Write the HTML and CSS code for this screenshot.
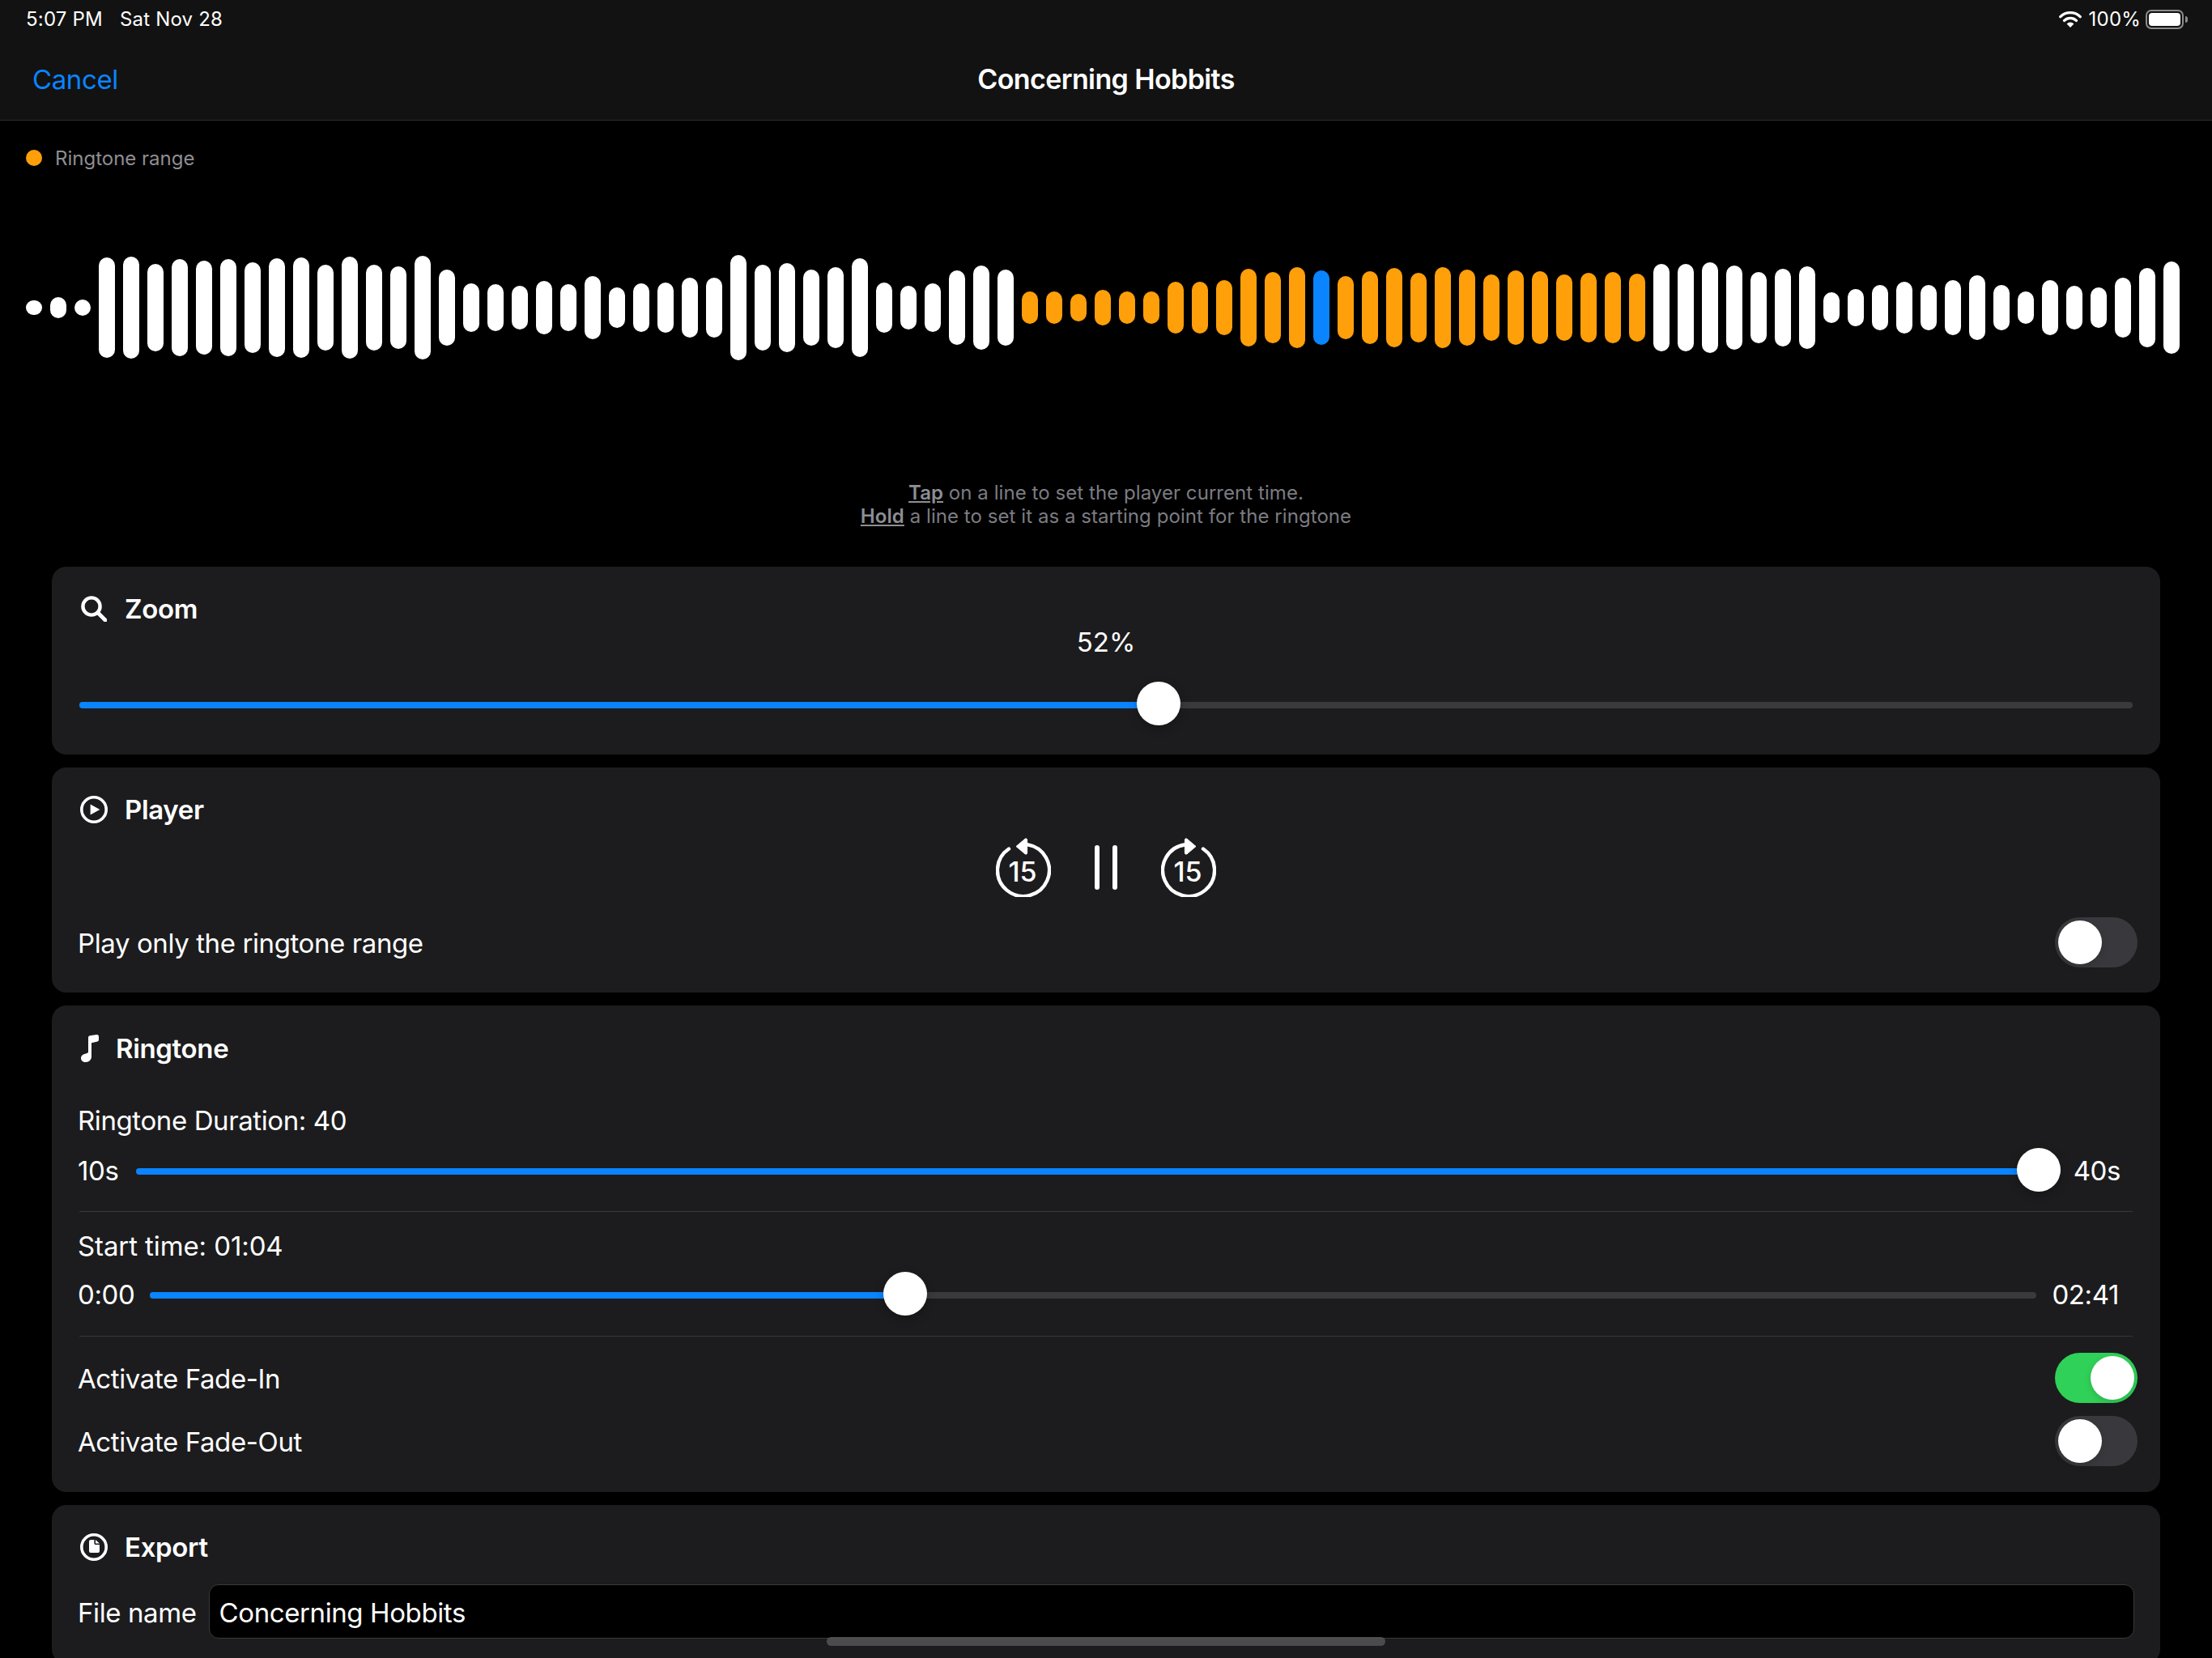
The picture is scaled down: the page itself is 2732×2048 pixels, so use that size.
FILE: index.html
```html
<!DOCTYPE html>
<html lang="en">
<head>
<meta charset="utf-8">
<title>Concerning Hobbits</title>
<link rel="stylesheet" href="styles.css">
</head>
<body>
<div class="page">
  <header class="topbar">
    <div class="status">
      <div class="status-left"><span>5:07 PM</span><span>Sat Nov 28</span></div>
      <div class="status-right">
        <svg class="wifi" viewBox="0 0 28 21"><path d="M1.8 7.6A17.5 17.5 0 0 1 26.2 7.6M6.6 12.4A10.6 10.6 0 0 1 21.4 12.4" fill="none" stroke="#fff" stroke-width="3.4" stroke-linecap="round"/><path d="M14 21 9.6 16.4A6.3 6.3 0 0 1 18.4 16.4Z" fill="#fff"/></svg>
        <span>100%</span>
        <div class="battery"><div class="battery-fill"></div></div><div class="battery-nub"></div>
      </div>
    </div>
    <nav class="navbar">
      <span class="cancel">Cancel</span>
      <span class="title">Concerning Hobbits</span>
    </nav>
  </header>

  <div class="legend"><span class="legend-dot"></span><span>Ringtone range</span></div>

  <div class="wave">
    <i class="bar" style="height:18px"></i><i class="bar" style="height:26px"></i><i class="bar" style="height:20px"></i>
    <i class="bar" style="height:124px"></i><i class="bar" style="height:126px"></i><i class="bar" style="height:108px"></i><i class="bar" style="height:120px"></i><i class="bar" style="height:116px"></i><i class="bar" style="height:120px"></i><i class="bar" style="height:112px"></i><i class="bar" style="height:122px"></i><i class="bar" style="height:124px"></i><i class="bar" style="height:106px"></i><i class="bar" style="height:126px"></i><i class="bar" style="height:106px"></i><i class="bar" style="height:102px"></i><i class="bar" style="height:128px"></i><i class="bar" style="height:94px"></i><i class="bar" style="height:60px"></i><i class="bar" style="height:58px"></i><i class="bar" style="height:54px"></i><i class="bar" style="height:66px"></i><i class="bar" style="height:58px"></i><i class="bar" style="height:78px"></i><i class="bar" style="height:50px"></i><i class="bar" style="height:60px"></i><i class="bar" style="height:62px"></i><i class="bar" style="height:74px"></i><i class="bar" style="height:74px"></i>
    <i class="bar" style="height:130px"></i><i class="bar" style="height:106px"></i><i class="bar" style="height:110px"></i><i class="bar" style="height:94px"></i><i class="bar" style="height:100px"></i><i class="bar" style="height:122px"></i><i class="bar" style="height:62px"></i><i class="bar" style="height:54px"></i><i class="bar" style="height:60px"></i><i class="bar" style="height:92px"></i><i class="bar" style="height:104px"></i><i class="bar" style="height:94px"></i>
    <i class="bar range" style="height:40px"></i><i class="bar range" style="height:40px"></i><i class="bar range" style="height:34px"></i><i class="bar range" style="height:44px"></i><i class="bar range" style="height:40px"></i><i class="bar range" style="height:40px"></i><i class="bar range" style="height:64px"></i><i class="bar range" style="height:64px"></i><i class="bar range" style="height:68px"></i><i class="bar range" style="height:96px"></i><i class="bar range" style="height:88px"></i><i class="bar range" style="height:100px"></i><i class="bar current" style="height:92px"></i><i class="bar range" style="height:78px"></i><i class="bar range" style="height:90px"></i><i class="bar range" style="height:98px"></i><i class="bar range" style="height:86px"></i><i class="bar range" style="height:100px"></i>
    <i class="bar range" style="height:94px"></i><i class="bar range" style="height:82px"></i><i class="bar range" style="height:92px"></i><i class="bar range" style="height:90px"></i><i class="bar range" style="height:82px"></i><i class="bar range" style="height:86px"></i><i class="bar range" style="height:88px"></i><i class="bar range" style="height:84px"></i>
    <i class="bar" style="height:108px"></i><i class="bar" style="height:108px"></i><i class="bar" style="height:112px"></i><i class="bar" style="height:104px"></i><i class="bar" style="height:88px"></i><i class="bar" style="height:96px"></i><i class="bar" style="height:102px"></i><i class="bar" style="height:38px"></i><i class="bar" style="height:46px"></i><i class="bar" style="height:56px"></i><i class="bar" style="height:64px"></i><i class="bar" style="height:56px"></i><i class="bar" style="height:68px"></i><i class="bar" style="height:80px"></i><i class="bar" style="height:56px"></i><i class="bar" style="height:40px"></i><i class="bar" style="height:68px"></i><i class="bar" style="height:54px"></i><i class="bar" style="height:50px"></i><i class="bar" style="height:74px"></i><i class="bar" style="height:98px"></i><i class="bar" style="height:114px"></i>
  </div>

  <p class="help"><u class="strong">Tap</u> on a line to set the player current time.<br><u class="strong">Hold</u> a line to set it as a starting point for the ringtone</p>

  <main class="cards">
    <section class="card card-zoom">
      <h2 class="card-head">
        <svg class="ic-search" viewBox="0 0 32 32"><circle cx="13" cy="13" r="10.6" fill="none" stroke="#fff" stroke-width="4.4"/><path d="M21 21 30 30" stroke="#fff" stroke-width="4.8" stroke-linecap="round"/></svg>
        <span>Zoom</span>
      </h2>
      <div class="percent">52%</div>
      <div class="slider slider-zoom">
        <div class="track"><div class="fill" style="width:52.5%"></div></div>
        <div class="thumb" style="left:51.48%"></div>
      </div>
    </section>

    <section class="card">
      <h2 class="card-head">
        <svg class="ic-circle" viewBox="0 0 34 34"><circle cx="17" cy="17" r="15.2" fill="none" stroke="#fff" stroke-width="3.6"/><path d="M12.6 10.6 24.4 17 12.6 23.4Z" fill="#fff"/></svg>
        <span>Player</span>
      </h2>
      <div class="controls">
        <svg class="ic-skip" viewBox="0 0 68 73"><path d="M16 13.5A32 32 0 1 0 38 8.25" fill="none" stroke="#fff" stroke-width="4.4" stroke-linecap="round"/><path d="M25 10.5 36 1.2Q38.6 0 38.6 3V18Q38.6 21 36 19.8Z" fill="#fff" stroke="#fff" stroke-width="1" stroke-linejoin="round"/><text class="skip-num" x="33" y="54" text-anchor="middle">15</text></svg>
        <svg class="ic-pause" viewBox="0 0 28 55"><rect width="6" height="55" rx="3" fill="#fff"/><rect x="22" width="6" height="55" rx="3" fill="#fff"/></svg>
        <svg class="ic-skip" viewBox="0 0 68 73"><path d="M52 13.5A32 32 0 1 1 30 8.25" fill="none" stroke="#fff" stroke-width="4.4" stroke-linecap="round"/><path d="M43 10.5 32 1.2Q29.4 0 29.4 3V18Q29.4 21 32 19.8Z" fill="#fff" stroke="#fff" stroke-width="1" stroke-linejoin="round"/><text class="skip-num" x="33" y="54" text-anchor="middle">15</text></svg>
      </div>
      <div class="row">
        <span>Play only the ringtone range</span>
        <div class="toggle"><div class="knob"></div></div>
      </div>
    </section>

    <section class="card card-ringtone">
      <h2 class="card-head card-head-tight">
        <svg class="ic-note" viewBox="0 0 22 34"><path d="M9 3.6Q9 1.6 11 1.2L19.4.1Q22 0 22 2.4V6.6Q22 8.2 20.4 8.6L13 10.2V27C13 31 10 34 6 34 2.4 34 0 32 0 29 0 25.5 3 24 6 23.4 7.4 23.1 9 22.9 9 21.6Z" fill="#fff"/></svg>
        <span>Ringtone</span>
      </h2>
      <div class="label label-first">Ringtone Duration: 40</div>
      <div class="slider-row">
        <span>10s</span>
        <div class="slider slider-duration">
          <div class="track"><div class="fill" style="width:100%"></div></div>
          <div class="thumb thumb-end"></div>
        </div>
        <span>40s</span>
      </div>
      <div class="divider"></div>
      <div class="label label-second">Start time: 01:04</div>
      <div class="slider-row slider-row-start">
        <span>0:00</span>
        <div class="slider">
          <div class="track"><div class="fill" style="width:40.0%"></div></div>
          <div class="thumb" style="left:38.85%"></div>
        </div>
        <span>02:41</span>
      </div>
      <div class="divider divider-b"></div>
      <div class="row">
        <span>Activate Fade-In</span>
        <div class="toggle on"><div class="knob"></div></div>
      </div>
      <div class="row row-next">
        <span>Activate Fade-Out</span>
        <div class="toggle"><div class="knob"></div></div>
      </div>
    </section>

    <section class="card">
      <h2 class="card-head">
        <svg class="ic-circle" viewBox="0 0 34 34"><circle cx="17" cy="17" r="15.2" fill="none" stroke="#fff" stroke-width="3.6"/><path d="M11 10a2 2 0 0 1 2-2h4.4v4.6a1.4 1.4 0 0 0 1.4 1.4H24v8a2 2 0 0 1-2 2H13a2 2 0 0 1-2-2Z" fill="#fff"/><path d="M19 8 24 12.6H19Z" fill="#fff"/></svg>
        <span>Export</span>
      </h2>
      <div class="file-row">
        <span>File name</span>
        <div class="file-input">Concerning Hobbits</div>
      </div>
    </section>
  </main>

  <div class="home-bar"></div>
</div>
</body>
</html>
```

FILE: styles.css
```css
* { box-sizing: border-box; }
html, body { margin: 0; padding: 0; background: #000; }
body { font-family: Inter, "Liberation Sans", sans-serif; color: #fff; }
.page { position: relative; width: 2732px; height: 2048px; overflow: hidden; background: #000; }

.topbar { background: #121212; border-bottom: 1px solid #2c2c2e; height: 149px; }
.status { height: 47px; padding: 0 30px 0 32px; display: flex; justify-content: space-between; align-items: center; font-size: 24px; letter-spacing: 0.2px; }
.status-left { display: flex; gap: 21px; }
.status-right { display: flex; align-items: center; }
.wifi { width: 28px; height: 21px; margin-right: 9px; }
.battery { width: 47px; height: 24px; margin-left: 6px; border: 2px solid #8c8c8e; border-radius: 7px; padding: 2px; }
.battery-fill { width: 100%; height: 100%; background: #fff; border-radius: 4px; }
.battery-nub { width: 3px; height: 8px; margin-left: 2px; background: #8c8c8e; border-radius: 0 3px 3px 0; }

.navbar { position: relative; height: 101px; display: flex; align-items: center; justify-content: center; font-size: 34px; }
.cancel { position: absolute; left: 40px; font-size: 33px; color: #0a84ff; letter-spacing: -0.4px; }
.title { font-weight: 600; letter-spacing: -0.6px; }

.legend { height: 40px; margin-top: 26px; padding-left: 32px; display: flex; align-items: center; gap: 16px; font-size: 24px; color: #8e8e93; }
.legend-dot { width: 20px; height: 20px; border-radius: 50%; background: #ff9f0a; }

.wave { height: 140px; margin-top: 95px; padding-left: 32px; display: flex; align-items: center; gap: 10px; }
.bar { display: block; flex: none; width: 20px; background: #fff; border-radius: 10px; }
.bar.range { background: #ff9f0a; }
.bar.current { background: #0a84ff; }

.help { margin: 144px 0 0; text-align: center; font-size: 24px; line-height: 29px; letter-spacing: 0.06px; color: #7c7c82; }
.strong { font-weight: 600; color: #8e8e93; }

.cards { margin-top: 48px; padding: 0 64px; display: flex; flex-direction: column; gap: 16px; }
.card { background: #1c1c1e; border-radius: 18px; padding: 30px 34px 31px; font-size: 33px; }
.card-zoom { padding-bottom: 36px; }
.card-ringtone { padding-bottom: 32px; }
.card-head { margin: 0; height: 44px; display: flex; align-items: center; gap: 21px; font-size: 33px; font-weight: 600; letter-spacing: -0.35px; }
.card-head-tight { margin-top: 1px; }
.ic-search { width: 32px; height: 32px; margin: 0 1px 0 2px; }
.ic-circle { width: 34px; height: 34px; margin-left: 1px; }
.ic-note { width: 22px; height: 34px; margin-left: 2px; }

.percent { height: 38px; margin-bottom: 0; line-height: 38px; text-align: center; font-size: 33px; }
.slider { position: relative; flex: 1; height: 54px; display: flex; align-items: center; }
.slider-zoom { margin-top: 30px; }
.slider-duration { margin: 0 -3px 0 3px; }
.track { width: 100%; height: 8px; margin-top: 4px; background: #3a3a3c; border-radius: 4px; overflow: hidden; }
.fill { height: 100%; background: #0a84ff; }
.thumb { position: absolute; top: 0; width: 54px; height: 54px; border-radius: 50%; background: #fff; box-shadow: 0 4px 12px rgba(0,0,0,.25); }
.thumb-end { right: 0; }

.controls { height: 73px; margin: 13px 0 25px; display: flex; justify-content: center; align-items: center; gap: 54px; }
.ic-skip { width: 68px; height: 73px; }
.ic-pause { width: 28px; height: 55px; margin-top: -1px; }
.skip-num { font-family: Inter, sans-serif; font-size: 34px; font-weight: 500; fill: #fff; letter-spacing: 0; }

.row { height: 62px; margin: 0 -6px 0 -2px; display: flex; align-items: center; justify-content: space-between; letter-spacing: -0.4px; }
.row > span, .slider-row > span, .file-row > span, .file-input { padding-top: 2px; }
.row-next { margin-top: 16px; }
.toggle { width: 102px; height: 62px; padding: 4px; border-radius: 31px; background: #39393d; }
.toggle.on { background: #30d158; }
.toggle.on .knob { margin-left: 40px; }
.knob { width: 54px; height: 54px; border-radius: 50%; background: #fff; box-shadow: 0 3px 8px rgba(0,0,0,.15); }

.label { height: 44px; margin-left: -2px; display: flex; align-items: center; letter-spacing: -0.4px; }
.label-first { margin-top: 45px; }
.label-second { margin-top: 18px; padding-top: 4px; letter-spacing: -0.1px; }
.slider-row { height: 54px; margin: 12px 0 0 -2px; padding-right: 15px; display: flex; align-items: center; gap: 19px; letter-spacing: -0.4px; }
.slider-row-start { padding-right: 17px; }
.divider { height: 1px; margin-top: 24px; background: #38383a; }
.divider-b { margin: 25px 0 20px; }

.file-row { margin: 24px 0 0 -2px; display: flex; align-items: center; gap: 15px; letter-spacing: -0.4px; }
.file-input { flex: 1; height: 67px; margin-right: -2px; padding-left: 12px; display: flex; align-items: center; background: #000; border: 1px solid #3a3a3c; border-radius: 12px; }

.home-bar { position: absolute; left: 1021px; top: 2022px; width: 690px; height: 11px; border-radius: 6px; background: rgba(95,95,97,.7); }
```
